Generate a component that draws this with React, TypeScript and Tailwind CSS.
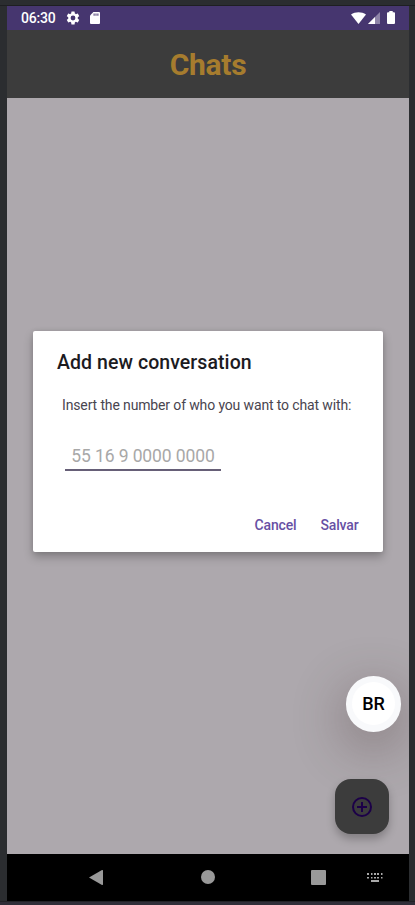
import React from "react";

function StatusBar() {
  return (
    <div className="flex h-[23.5px] shrink-0 items-center bg-[#46366f] pl-[14px] text-white">
      <span className="w-[36px] whitespace-nowrap text-[14px] leading-[24px] font-medium tracking-[-0.2px]">06:30</span>
      <svg className="ml-[8px] h-[16px] w-[16px]" viewBox="0 0 24 24" fill="currentColor">
        <path d="M19.14 12.94c.04-.3.06-.61.06-.94s-.02-.64-.07-.94l2.03-1.58a.49.49 0 0 0 .12-.61l-1.92-3.32a.49.49 0 0 0-.59-.22l-2.39.96a7 7 0 0 0-1.62-.94l-.36-2.54A.48.48 0 0 0 13.92 2.4h-3.84a.48.48 0 0 0-.47.41l-.36 2.54c-.59.24-1.13.57-1.62.94l-2.39-.96a.48.48 0 0 0-.59.22L2.74 8.87a.48.48 0 0 0 .12.61l2.03 1.58a6 6 0 0 0 0 1.88l-2.03 1.58a.49.49 0 0 0-.12.61l1.92 3.32c.12.22.37.29.59.22l2.39-.96c.5.38 1.03.7 1.62.94l.36 2.54c.05.24.24.41.48.41h3.84c.24 0 .44-.17.47-.41l.36-2.54a7 7 0 0 0 1.62-.94l2.39.96c.22.08.47 0 .59-.22l1.92-3.32a.48.48 0 0 0-.12-.61zM12 15.6a3.6 3.6 0 1 1 0-7.2 3.6 3.6 0 0 1 0 7.2z" />
      </svg>
      <svg className="ml-[9px] h-[12px] w-[10px]" viewBox="0 0 10 12">
        <path d="M3.4 0H9a1 1 0 0 1 1 1v10a1 1 0 0 1-1 1H1a1 1 0 0 1-1-1V3.4z" fill="#fff" />
        <path d="M3.6 1.4h1v2.3h-1zM5.5 1.4h1v2.3h-1zM7.4 1.4h1v2.3h-1z" fill="#46366f" />
      </svg>
      <svg className="ml-auto h-[12px] w-[15px]" viewBox="0 0 15 12">
        <path d="M0 2.6C4.3-.6 10.7-.6 15 2.6L7.5 12z" fill="#fff" />
      </svg>
      <svg className="ml-[2.5px] h-[12px] w-[12px]" viewBox="0 0 12 12">
        <path d="M12 0v12H0z" fill="#8e84a8" />
        <path d="M7 5v7H0z" fill="#fff" />
      </svg>
      <svg className="mr-[14px] ml-[7px] h-[13px] w-[8px]" viewBox="0 0 8 13">
        <path d="M2.3 0h3.4v1.3H7a1 1 0 0 1 1 1V12a1 1 0 0 1-1 1H1a1 1 0 0 1-1-1V2.3a1 1 0 0 1 1-1h1.3z" fill="#fff" />
      </svg>
    </div>
  );
}

function ConversationDialog() {
  return (
    <section className="mt-[233px] ml-[26px] flex h-[221px] w-[350px] shrink-0 flex-col rounded-[2px] bg-white shadow-[0_5px_10px_rgba(0,0,0,0.25),0_0_4px_rgba(0,0,0,0.1)]">
      <h2 className="mt-[20px] ml-[24px] text-[19.5px] leading-[24px] font-medium tracking-[0.07px] whitespace-nowrap text-[#1c1b1f]">
        Add new conversation
      </h2>
      <p className="mt-[20px] ml-[29px] text-[14px] leading-[20px] tracking-[-0.135px] whitespace-nowrap text-[#49454f]">
        Insert the number of who you want to chat with:
      </p>
      <div className="mt-[29px] ml-[32px] flex h-[27px] w-[156px] items-start justify-center border-b-2 border-[#665f77] text-[17.5px] leading-[24px] tracking-[-0.1px] whitespace-nowrap text-[#a8a8a8]">
        55 16 9 0000 0000
      </div>
      <div className="mt-[44px] mr-[24.5px] flex justify-end gap-[24px] text-[14px] leading-[20px] font-medium tracking-[-0.15px] text-[#6750a4]">
        <button>Cancel</button>
        <button>Salvar</button>
      </div>
    </section>
  );
}

function NavigationBar() {
  return (
    <nav className="flex h-[47px] shrink-0 items-center bg-black text-[#999]">
      <svg className="ml-[82px] h-[15px] w-[14px]" viewBox="0 0 14 15" fill="currentColor">
        <path d="M0 7.5 13 .1q1-.3 1 .7v13.4q0 1-1 .7z" />
      </svg>
      <div className="mb-px ml-[98px] h-[14px] w-[14px] rounded-full bg-[#999]" />
      <div className="ml-[96px] h-[15px] w-[15px] rounded-[1px] bg-[#999]" />
      <svg className="ml-[41px] h-[9px] w-[16px]" viewBox="0 0 16 9" fill="#aaa">
        <path d="M0 0h2v2H0zM4 0h1.5v2H4zM7 0h2v2H7zM10 0h2v2h-2zM14 0h1.5v2H14zM0 4h2v1.5H0zM4 4h1.5v1.5H4zM7 4h2v1.5H7zM10 4h2v1.5h-2zM14 4h1.5v1.5H14zM4 7h8v2H4z" />
      </svg>
    </nav>
  );
}

export default function App() {
  return (
    <div className="flex h-[905px] w-[415px] flex-col overflow-hidden bg-[#2b2d30] font-['Roboto',sans-serif]">
      <div className="h-[6px] shrink-0 border-b border-[#1e1f22]" />
      <div className="ml-[7px] flex h-[895px] w-[402px] shrink-0 flex-col overflow-hidden">
        <StatusBar />
        <header className="flex h-[68.5px] shrink-0 items-center justify-center bg-[#3c3c3c] pt-[2px]">
          <h1 className="text-[30px] leading-[36px] font-bold tracking-[-0.3px] text-[#a67c2e]">Chats</h1>
        </header>
        <main className="flex h-[756px] shrink-0 flex-col overflow-hidden bg-[#ada8ad]">
          <ConversationDialog />
          <div className="mt-[124px] mr-[8px] flex h-[56px] w-[55px] shrink-0 items-center justify-center self-end rounded-full bg-[#f8f9fb] pb-[2px] shadow-[0_14px_50px_6px_rgba(70,50,50,0.32)]">
            <div className="flex h-[43px] w-[43px] items-center justify-center rounded-full bg-white text-[18px] font-medium tracking-[-0.2px] text-black">
              BR
            </div>
          </div>
          <button className="mt-[47px] mr-[20px] flex h-[55px] w-[54.5px] shrink-0 items-center justify-center self-end rounded-[16px] bg-[#3c3c3c] shadow-[0_5px_9px_rgba(0,0,0,0.25)]">
            <svg className="h-[20px] w-[20px]" viewBox="0 0 20 20" fill="none" stroke="#1c0048" strokeWidth="2">
              <circle cx="10" cy="10" r="9" />
              <path d="M10 5v10M5 10h10" />
            </svg>
          </button>
        </main>
        <NavigationBar />
      </div>
      <div className="h-[4px] shrink-0 border-t border-[#222226] bg-[#302e38]" />
    </div>
  );
}
